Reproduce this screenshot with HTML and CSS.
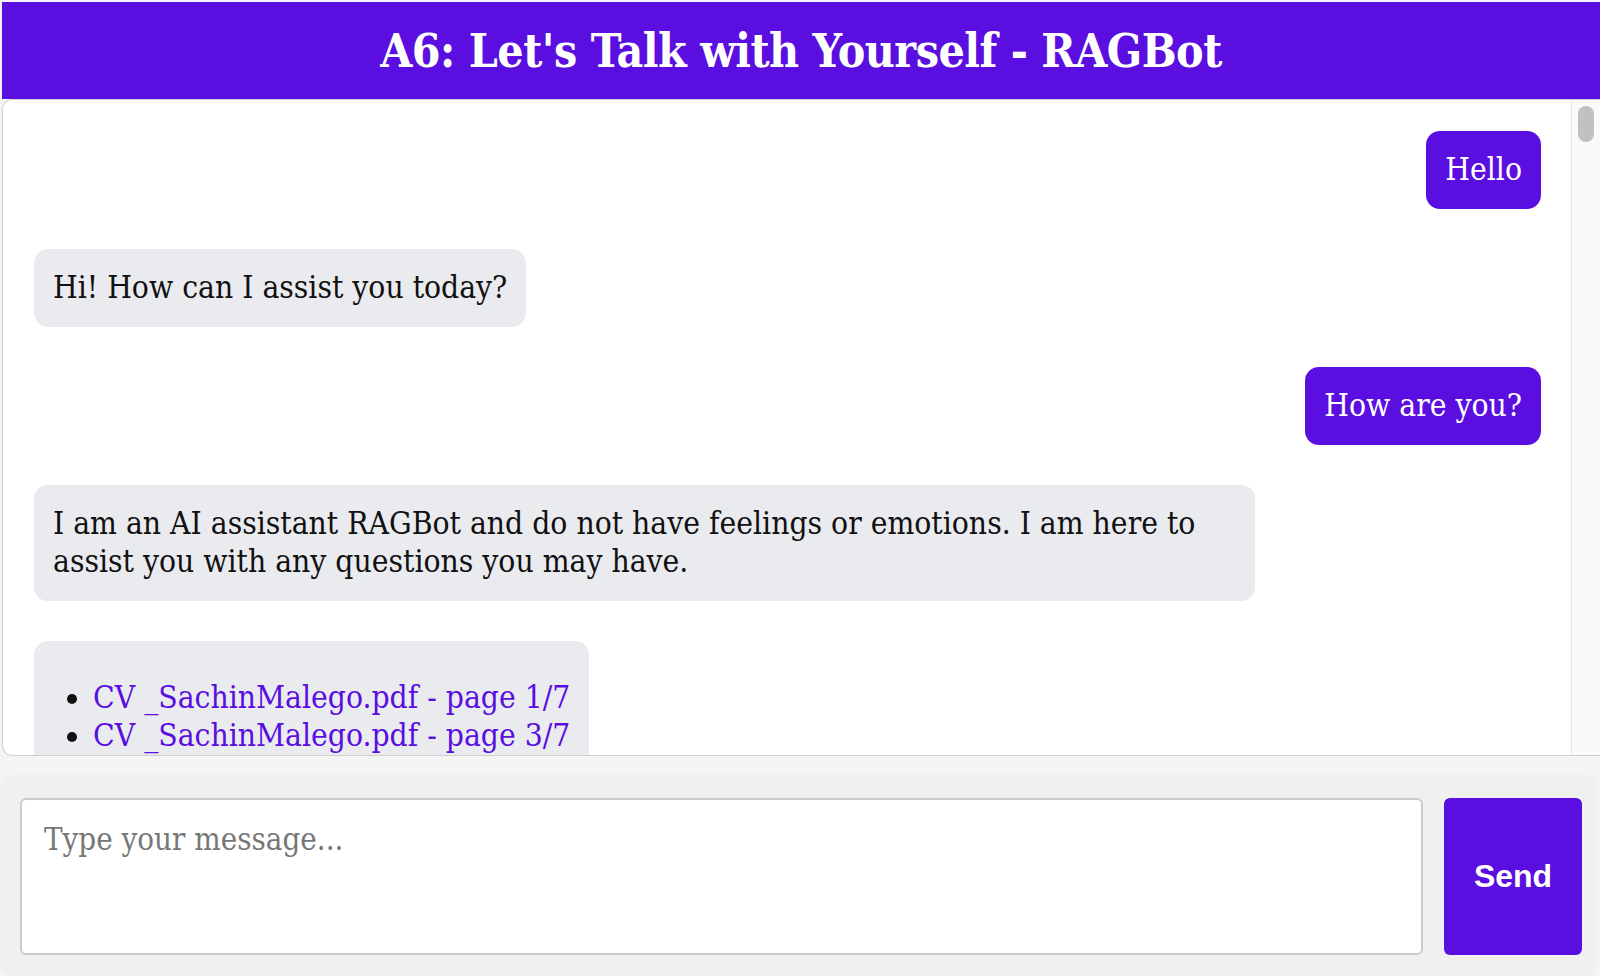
FILE: index.html
```html
<!DOCTYPE html>
<html lang="en">
<head>
<meta charset="utf-8">
<title>A6: Let's Talk with Yourself - RAGBot</title>
<link rel="stylesheet" href="styles.css">
</head>
<body>
<div class="app">
  <header class="header">
    <h1 class="title">A6: Let's Talk with Yourself - RAGBot</h1>
  </header>
  <section class="chat">
    <div class="messages">
      <div class="msg msg-user">Hello</div>
      <div class="msg msg-bot">Hi! How can I assist you today?</div>
      <div class="msg msg-user">How are you?</div>
      <div class="msg msg-bot msg-wide">I am an AI assistant RAGBot and do not have feelings or emotions. I am here to assist you with any questions you may have.</div>
      <div class="msg msg-bot msg-sources">
        <ul class="sources">
          <li><a href="#" class="source-link">CV _SachinMalego.pdf - page 1/7</a></li>
          <li><a href="#" class="source-link">CV _SachinMalego.pdf - page 3/7</a></li>
        </ul>
      </div>
    </div>
    <div class="scroll-track"><div class="scroll-thumb"></div></div>
  </section>
  <form class="composer" onsubmit="return false">
    <textarea class="input" placeholder="Type your message..."></textarea>
    <button type="submit" class="send">Send</button>
  </form>
</div>
</body>
</html>
```
FILE: styles.css
```css
* { box-sizing: border-box; }
html, body { margin: 0; padding: 0; }
body {
  background: #f4f4f4;
  font-family: "DejaVu Serif Condensed", "DejaVu Serif", serif;
  font-stretch: condensed;
  overflow: hidden;
}
.app {
  width: 1600px;
  height: 976px;
  padding: 2px 0 0 2px;
  display: flex;
  flex-direction: column;
}
.header {
  background: #5a0fe0;
  height: 97px;
  display: flex;
  align-items: center;
  justify-content: center;
  flex: none;
}
.title {
  margin: 0;
  color: #fff;
  font-size: 46px;
  font-weight: bold;
  letter-spacing: -0.5px;
}
.chat {
  flex: none;
  height: 657px;
  background: #fff;
  border: 1px solid #cfcfcf;
  border-right: none;
  border-radius: 10px 0 0 10px;
  display: flex;
  overflow: hidden;
}
.messages {
  flex: 1;
  overflow: hidden;
  padding: 31px 30px 0 31px;
  display: flex;
  flex-direction: column;
  align-items: flex-start;
  gap: 40px;
}
.msg {
  flex: none;
  font-size: 31.5px;
  line-height: 38px;
  padding: 19px 19px 21px;
  border-radius: 14px;
  max-width: 81%;
}
.msg-user {
  align-self: flex-end;
  background: #5a0fe0;
  color: #fff;
}
.msg-bot {
  background: #eaebef;
  color: #111;
}
.sources {
  margin: 18px 0 0;
  padding-left: 40px;
}
.source-link {
  color: #5a0fe0;
  text-decoration: none;
}
.scroll-track {
  flex: none;
  width: 29px;
  background: #fafafa;
  border-left: 1px solid #e6e6e6;
  padding: 6px 6px 0 6px;
}
.scroll-thumb {
  height: 36px;
  border-radius: 8px;
  background: #c1c1c1;
}
.composer {
  flex: none;
  margin: 21px 5px 2px 0;
  height: 197px;
  background: #f0f0f0;
  border-radius: 10px;
  box-shadow: 0 0 6px rgba(0,0,0,0.04);
  padding: 21px 13px 19px 18px;
  display: flex;
  gap: 21px;
}
.input {
  flex: 1;
  height: 157px;
  resize: none;
  border: 2px solid #cbcbcb;
  border-radius: 6px;
  background: #fff;
  padding: 20px 22px;
  font-family: inherit;
  font-stretch: condensed;
  font-size: 31px;
  line-height: 38px;
  color: #111;
  outline: none;
}
.input::placeholder { color: #777; }
.send {
  flex: none;
  width: 138px;
  height: 157px;
  border: none;
  border-radius: 6px;
  background: #5a0fe0;
  color: #fff;
  font-family: "Liberation Sans", Arial, sans-serif;
  font-weight: bold;
  font-size: 32px;
  cursor: pointer;
}
```
